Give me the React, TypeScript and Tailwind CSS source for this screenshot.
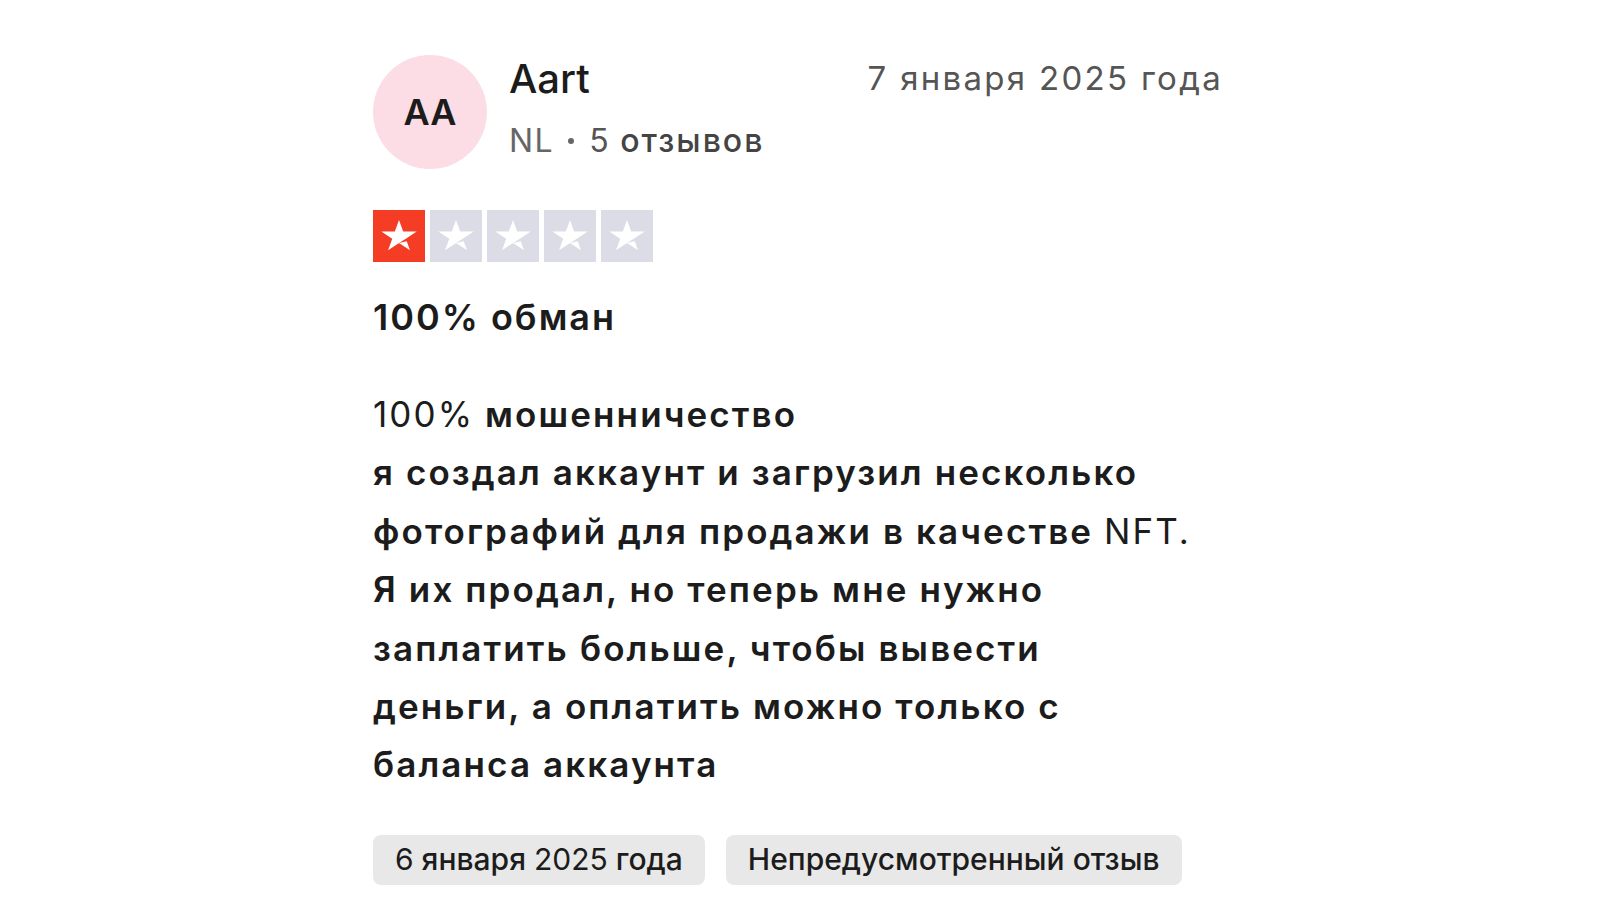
import React from "react";

const font = { fontFamily: "Inter, 'Liberation Sans', sans-serif" };

function Star({ filled }: { filled: boolean }) {
  return (
    <div className={`h-[52px] w-[52px] ${filled ? "bg-[#f53c25]" : "bg-[#dcdce6]"}`}>
      <svg viewBox="0 0 96 96" className="h-full w-full">
        <path
          fill="#fff"
          transform="translate(48 46.3) scale(1.2 1.08) translate(-48 -51.1)"
          d="M48 64.7L59.9 61.7 64.9 77 48 64.7ZM75.3 45H54.4L48 25.2 41.6 45H20.7L37.6 57.3 31.2 77 48.1 64.7 58.5 57.3 75.3 45Z"
        />
      </svg>
    </div>
  );
}

export default function App() {
  const lines = [
    <><span className="font-normal">100%</span> мошенничество</>,
    <>я создал аккаунт и загрузил несколько</>,
    <>фотографий для продажи в качестве <span className="font-normal">NFT.</span></>,
    <>Я их продал, но теперь мне нужно</>,
    <>заплатить больше, чтобы вывести</>,
    <>деньги, а оплатить можно только с</>,
    <>баланса аккаунта</>,
  ];

  return (
    <div className="min-h-screen bg-white text-[#1c1c1c]" style={font}>
      <div className="ml-[373px] w-[850px] pt-[55px]">

        {/* Header */}
        <div className="flex items-start">
          <div className="flex h-[114px] w-[114px] shrink-0 items-center justify-center rounded-full bg-[#fcdde6] text-[36px] font-semibold">
            AA
          </div>

          <div className="ml-[22px] flex flex-col">
            <p className="text-[40px] font-medium leading-[48px]">Aart</p>
            <p className="mt-[18px] flex items-center text-[32px] leading-[40px] tracking-[1.5px] text-[#666]">
              NL
              <span className="ml-[14px] mr-[15px] h-[6px] w-[6px] rounded-full bg-[#666]" />
              <span className="text-[#555]">5</span>
              <span className="ml-[10px] font-medium tracking-[2px] text-[#444]">отзывов</span>
            </p>
          </div>

          <p className="ml-auto mt-[3px] text-[33px] leading-[40px] tracking-[2.3px] text-[#555]">
            7 января 2025 года
          </p>
        </div>

        {/* Rating */}
        <div className="mt-[41px] flex gap-[5px]">
          {[0, 1, 2, 3, 4].map((i) => (
            <Star key={i} filled={i === 0} />
          ))}
        </div>

        <h2 className="mt-[33px] text-[36px] font-semibold leading-[44px] tracking-[2px]">100% обман</h2>

        {/* Body */}
        <div className="mt-[46px] text-[35px] font-semibold leading-[58.4px] tracking-[2.1px]">
          {lines.map((l, i) => (
            <p key={i}>{l}</p>
          ))}
        </div>

        {/* Tags */}
        <div className="mt-[41px] flex gap-[21px]">
          <span className="flex h-[50px] items-center rounded-lg bg-[#e8e8e8] px-[22px] text-[30px] font-medium">
            <span className="font-normal">6</span>&nbsp;января&nbsp;<span className="font-normal">2025</span>&nbsp;года
          </span>
          <span className="flex h-[50px] items-center rounded-lg bg-[#e8e8e8] px-[22px] text-[30px] font-medium">
            Непредусмотренный отзыв
          </span>
        </div>

      </div>
    </div>
  );
}
